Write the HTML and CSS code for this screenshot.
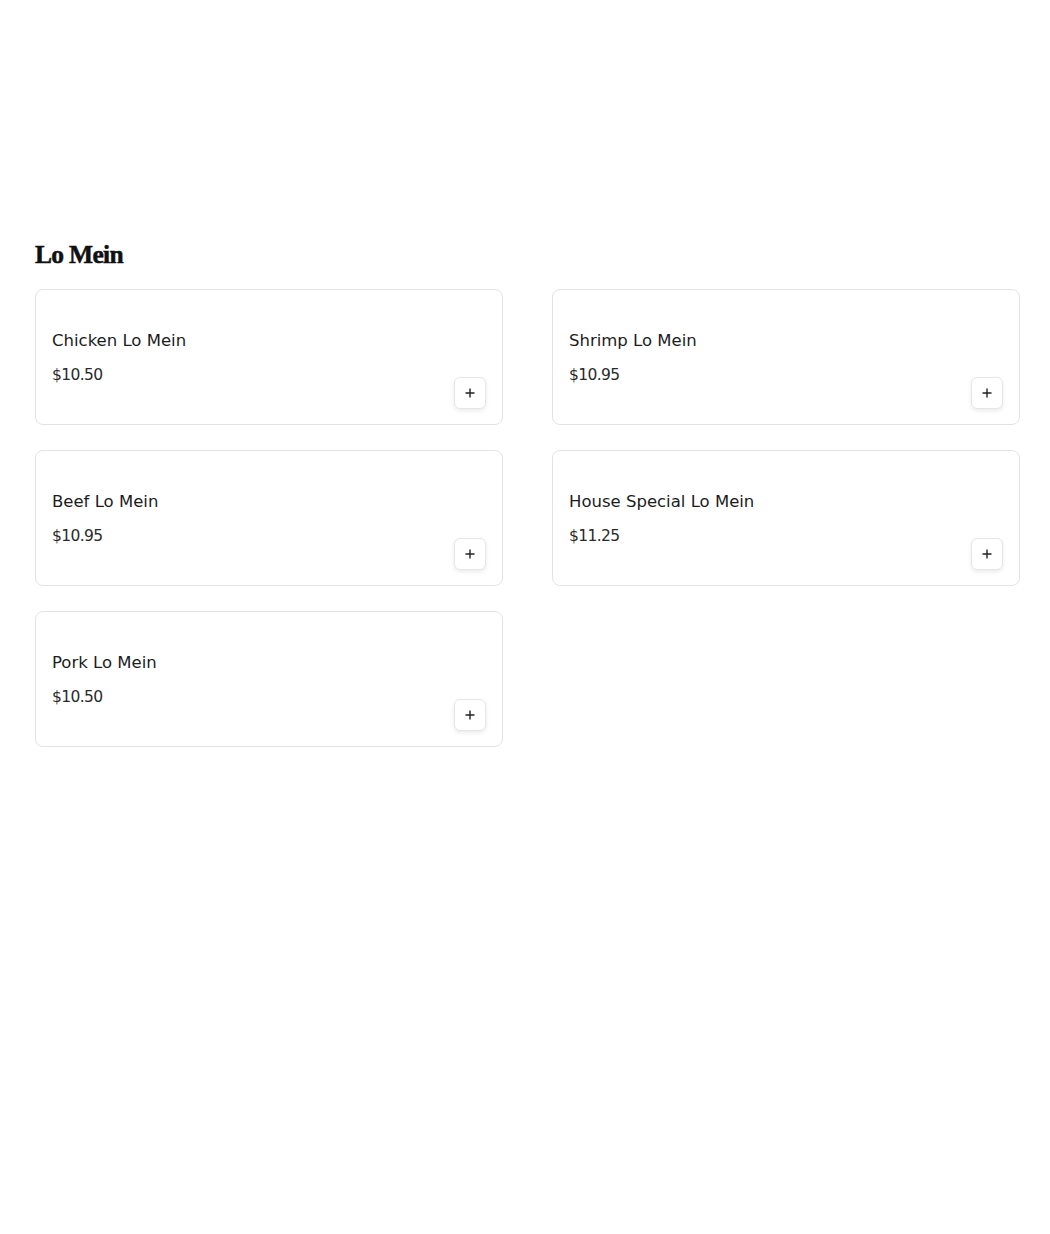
FILE: index.html
```html
<!DOCTYPE html>
<html lang="en">
<head>
<meta charset="utf-8">
<title>Lo Mein</title>
<link rel="stylesheet" href="styles.css">
</head>
<body>
<main class="menu">
  <section class="category">
    <h2 class="category-title">Lo Mein</h2>
    <div class="grid">
      <article class="card">
        <div class="info"><h3 class="name">Chicken Lo Mein</h3><p class="price">$10.50</p></div>
        <button class="add" aria-label="Add"><svg viewBox="0 0 12 12" width="12" height="12"><path d="M6 1.5v9M1.5 6h9" stroke="#222" stroke-width="1.4" fill="none"/></svg></button>
      </article>
      <article class="card">
        <div class="info"><h3 class="name">Shrimp Lo Mein</h3><p class="price">$10.95</p></div>
        <button class="add" aria-label="Add"><svg viewBox="0 0 12 12" width="12" height="12"><path d="M6 1.5v9M1.5 6h9" stroke="#222" stroke-width="1.4" fill="none"/></svg></button>
      </article>
      <article class="card">
        <div class="info"><h3 class="name">Beef Lo Mein</h3><p class="price">$10.95</p></div>
        <button class="add" aria-label="Add"><svg viewBox="0 0 12 12" width="12" height="12"><path d="M6 1.5v9M1.5 6h9" stroke="#222" stroke-width="1.4" fill="none"/></svg></button>
      </article>
      <article class="card">
        <div class="info"><h3 class="name">House Special Lo Mein</h3><p class="price">$11.25</p></div>
        <button class="add" aria-label="Add"><svg viewBox="0 0 12 12" width="12" height="12"><path d="M6 1.5v9M1.5 6h9" stroke="#222" stroke-width="1.4" fill="none"/></svg></button>
      </article>
      <article class="card">
        <div class="info"><h3 class="name">Pork Lo Mein</h3><p class="price">$10.50</p></div>
        <button class="add" aria-label="Add"><svg viewBox="0 0 12 12" width="12" height="12"><path d="M6 1.5v9M1.5 6h9" stroke="#222" stroke-width="1.4" fill="none"/></svg></button>
      </article>
    </div>
  </section>
</main>
</body>
</html>
```
FILE: styles.css
```css
* { box-sizing: border-box; }
html, body { margin: 0; padding: 0; background: #fff; }
body { font-family: "DejaVu Sans", "Noto Sans", sans-serif; color: #1c1c1c; }
.menu { padding: 236px 30px 0 35px; }
.category-title {
  margin: 0 0 15px;
  font-family: "Liberation Serif", "DejaVu Serif", serif;
  font-weight: 900;
  font-size: 25.5px;
  line-height: 38px;
  letter-spacing: -0.7px;
  color: #111;
  -webkit-text-stroke: 0.5px #111;
}
.grid {
  display: grid;
  grid-template-columns: 468px 468px;
  column-gap: 49px;
  row-gap: 25px;
}
.card {
  height: 136px;
  border: 1px solid #e3e3e3;
  border-radius: 8px;
  padding: 16px 16px 15px;
  display: flex;
  justify-content: space-between;
  align-items: flex-end;
}
.info { align-self: flex-start; padding-top: 23px; }
.name {
  margin: 0;
  font-weight: 500;
  font-size: 16.5px;
  line-height: 24px;
  color: #1c1c1c;
}
.price {
  margin: 10px 0 0;
  font-size: 15.5px;
  line-height: 24px;
  color: #2a2a2a;
  letter-spacing: -0.6px;
}
.add {
  width: 32px;
  height: 32px;
  padding: 0;
  border: 1px solid #e6e6e6;
  border-radius: 6px;
  background: #fff;
  box-shadow: 0 2px 4px rgba(0,0,0,0.08);
  display: flex;
  align-items: center;
  justify-content: center;
}
```
